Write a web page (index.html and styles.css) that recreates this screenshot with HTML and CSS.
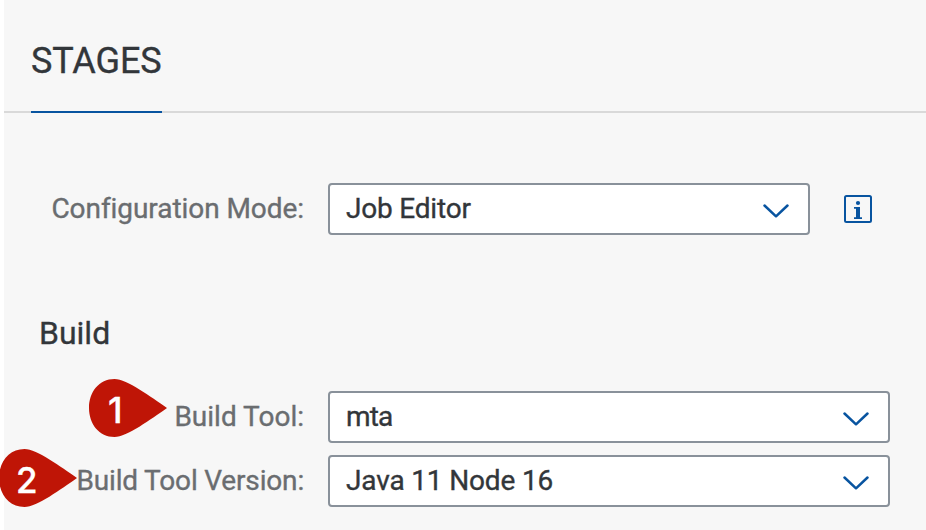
FILE: index.html
```html
<!DOCTYPE html>
<html lang="en">
<head>
<meta charset="utf-8">
<title>Stages</title>
<link rel="stylesheet" href="styles.css">
</head>
<body>
<main class="page">
  <nav class="tabs"><div class="tab"><span class="tab-text">STAGES</span></div></nav>
  <form class="form">
    <div class="row">
      <span class="label"><span class="label-mode">Configuration Mode:</span></span>
      <div class="select select-short"><span class="v-editor">Job Editor</span><svg class="chevron" viewBox="0 0 26 14"><path d="M1.5 1.5 13 12.3 24.5 1.5"/></svg></div>
      <svg class="info" viewBox="0 0 28 28"><rect x="1" y="1" width="26" height="26" rx="1.5"/><circle cx="14" cy="8" r="2.1"/><path d="M10 12h6v10.200h2V24h-8v-1.800h2v-8.400h-2z"/></svg>
    </div>
    <h2 class="heading">Build</h2>
    <div class="row">
      <span class="label"><span class="label-tool">Build Tool:</span></span>
      <div class="select"><span class="v-mta">mta</span><svg class="chevron" viewBox="0 0 26 14"><path d="M1.5 1.5 13 12.3 24.5 1.5"/></svg></div>
    </div>
    <div class="row">
      <span class="label"><span class="label-version">Build Tool Version:</span></span>
      <div class="select"><span class="v-java">Java 11 Node 16</span><svg class="chevron" viewBox="0 0 26 14"><path d="M1.5 1.5 13 12.3 24.5 1.5"/></svg></div>
    </div>
  </form>
</main>
<div class="pin pin-one"><svg viewBox="0 0 78 58"><path d="M78 29C62 40 38 58 25.500 58C10 58 0 45 0 29S10 0 25.500 0C38 0 62 18 78 29Z"/></svg><span>1</span></div>
<div class="pin pin-two"><svg viewBox="0 0 78 58"><path d="M78 29C62 40 38 58 25.500 58C10 58 0 45 0 29S10 0 25.500 0C38 0 62 18 78 29Z"/></svg><span>2</span></div>
</body>
</html>
```
FILE: styles.css
```css
* { box-sizing: border-box; }
body {
  margin: 0;
  height: 530px;
  overflow: hidden;
  background: #fff;
  color: #32363a;
  font: 28px/52px Roboto, "Liberation Sans", sans-serif;
  white-space: nowrap;
  -webkit-text-stroke: .35px currentColor;
}
.page { height: 530px; margin-left: 4px; background: #f7f7f7; }
.tabs {
  display: flex;
  height: 113px;
  padding-left: 27px;
  box-shadow: inset 0 -2px #d9d9d9;
}
.tab {
  width: 131px;
  padding-top: 35px;
  border-bottom: 2px solid #0854a0;
  font-size: 36px;
  letter-spacing: -.1px;
}
.form { padding-top: 70px; }
.row { display: flex; align-items: center; height: 52px; margin-bottom: 12px; }
.label {
  display: flex;
  justify-content: flex-end;
  width: 300px;
  margin-right: 24px;
  color: #6a6d70;
}
.label-mode { letter-spacing: -.06px; }
.label-version { letter-spacing: -.17px; }
.v-editor { letter-spacing: -.2px; }
.v-mta { letter-spacing: -.9px; }
.v-java { letter-spacing: -.15px; }
.select {
  display: flex;
  align-items: center;
  justify-content: space-between;
  width: 562px;
  height: 52px;
  padding: 0 19px 0 16px;
  border: 2px solid #89919a;
  border-radius: 4px;
  background: #fff;
}
.select-short { width: 482px; }
.chevron {
  width: 26px;
  height: 14px;
  margin-top: 3px;
  fill: none;
  stroke: #0854a0;
  stroke-width: 2.5;
  stroke-linecap: round;
  stroke-linejoin: round;
}
.info { width: 28px; height: 28px; margin-left: 34px; fill: #0854a0; }
.info rect { fill: none; stroke: #0854a0; stroke-width: 2; }
.heading {
  height: 52px;
  margin: 72px 0 32px;
  padding-left: 35px;
  font-size: 32px;
  font-weight: 400;
}
.pin { position: absolute; width: 78px; height: 58px; }
.pin-one { left: 89px; top: 379px; }
.pin-two { left: -1px; top: 449px; }
.pin svg { display: block; width: 78px; height: 58px; fill: #bf1506; }
.pin span {
  position: absolute;
  left: 17px;
  top: 5px;
  color: #fff;
  font: 500 35px/52px Inter, "Liberation Sans", sans-serif;
}
.pin-one span { left: 19px; }
```
